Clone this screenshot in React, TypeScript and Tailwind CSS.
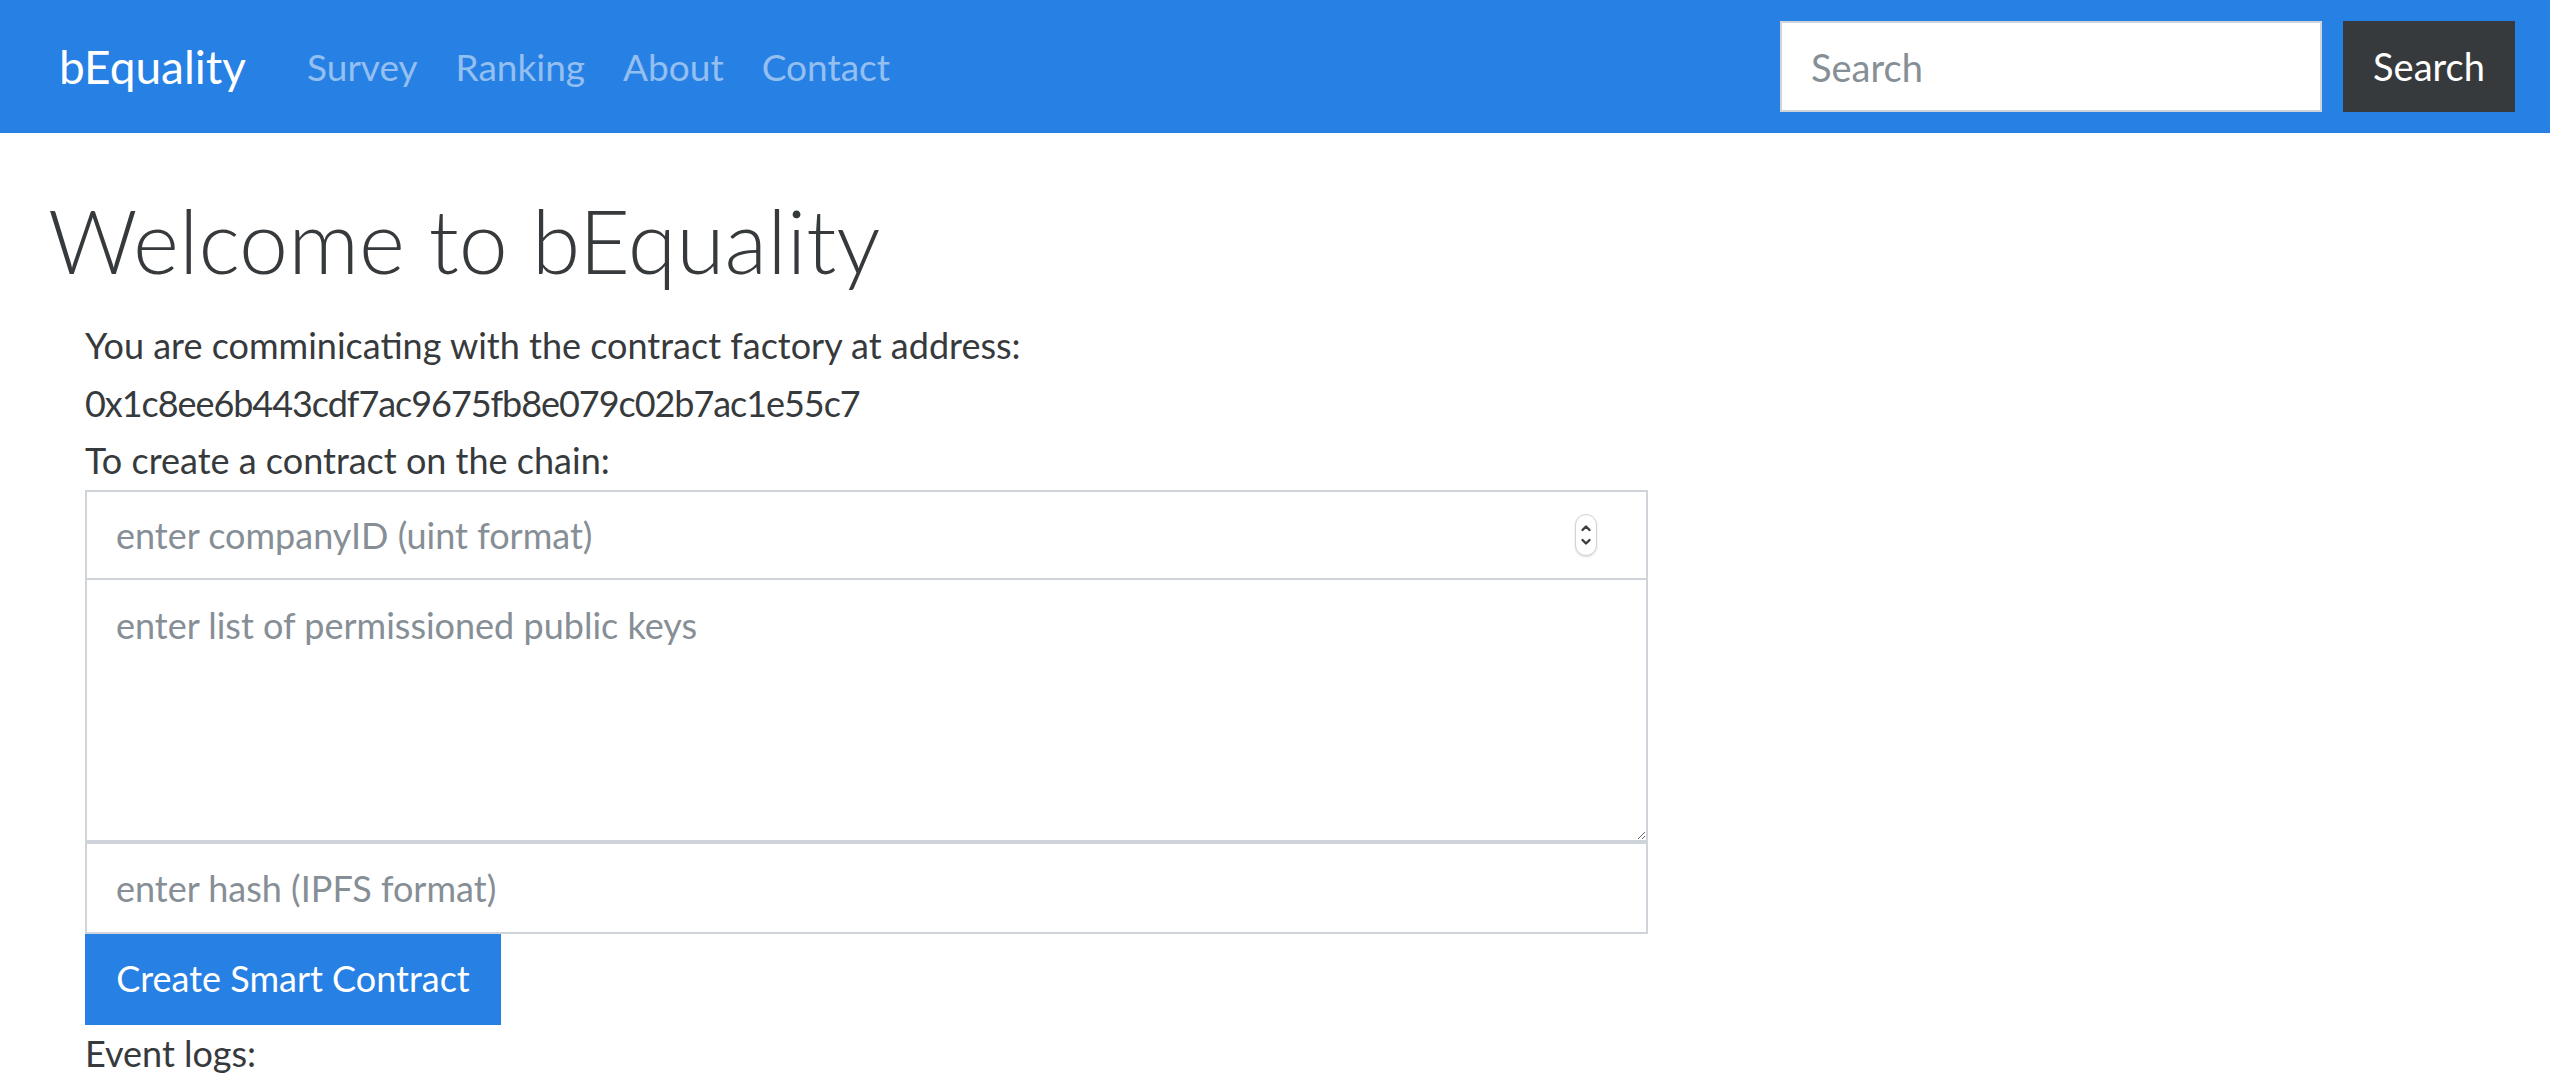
import React from "react";

export default function App() {
  return (
    <div className="min-h-screen bg-white font-['Lato','Open_Sans',sans-serif] text-[#373a3c]">
      <nav className="flex h-[133px] items-center bg-[#2780e3] pl-[59px] pr-[35px]">
        <a className="mr-[42px] text-[46px] leading-none text-white">bEquality</a>
        <ul className="flex items-center text-[37px] leading-none text-[rgba(255,255,255,0.5)]">
          <li className="px-[19px]">Survey</li>
          <li className="px-[19px]">Ranking</li>
          <li className="px-[19px]">About</li>
          <li className="px-[19px]">Contact</li>
        </ul>
        <div className="ml-auto flex items-center gap-[21px]">
          <input
            className="h-[91px] w-[542px] border-2 border-[#ced4da] bg-white px-[29px] text-[38px] outline-none placeholder:text-[#868e96]"
            placeholder="Search"
          />
          <button className="h-[91px] w-[172px] bg-[#373a3c] text-[38px] text-white">Search</button>
        </div>
      </nav>

      <main className="pl-[48px] pt-[38px]">
        <h1 className="mb-[8px] text-[88px] font-light leading-[138px]">Welcome to bEquality</h1>
        <div className="pl-[37px] text-[36px] leading-[57.6px]">
          <p>You are comminicating with the contract factory at address:</p>
          <p className="tracking-[-1.05px]">0x1c8ee6b443cdf7ac9675fb8e079c02b7ac1e55c7</p>
          <p>To create a contract on the chain:</p>
          <div className="w-[1563px]">
            <div className="relative">
              <input
                className="block h-[90px] w-full border-2 border-[#ced4da] bg-white px-[29px] text-[36px] outline-none placeholder:text-[#868e96]"
                placeholder="enter companyID (uint format)"
              />
              <div className="absolute right-[51px] top-[24px] flex h-[42px] w-[22px] flex-col items-center justify-center rounded-full border border-[#d4d4d4] bg-white shadow-[0_1px_2px_rgba(0,0,0,0.15)]">
                <svg width="12" height="30" viewBox="0 0 12 30" fill="none" stroke="#3c3c3c" strokeWidth="2.4" strokeLinecap="round" strokeLinejoin="round">
                  <path d="M2.5 10 L6 6.5 L9.5 10" />
                  <path d="M2.5 20 L6 23.5 L9.5 20" />
                </svg>
              </div>
            </div>
            <textarea
              className="block h-[262px] w-full border-2 border-t-0 border-[#ced4da] bg-white px-[29px] pb-[12px] pt-[17px] text-[36px] leading-[57.6px] outline-none placeholder:text-[#868e96]"
              placeholder="enter list of permissioned public keys"
            />
            <input
              className="block h-[92px] w-full border-2 border-t-2 border-[#ced4da] bg-white px-[29px] text-[36px] outline-none placeholder:text-[#868e96]"
              placeholder="enter hash (IPFS format)"
            />
          </div>
          <button className="block h-[91px] w-[416px] bg-[#2780e3] text-[36px] text-white">Create Smart Contract</button>
          <p>Event logs:</p>
        </div>
      </main>
    </div>
  );
}
